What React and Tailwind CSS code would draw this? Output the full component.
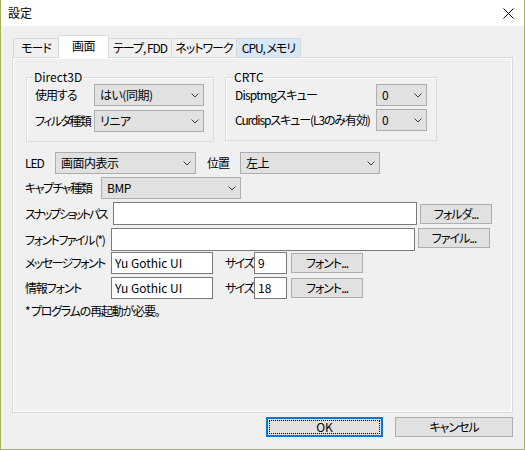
import React from 'react';

const Chevron = () => (
  <svg width="8" height="5" viewBox="0 0 8 5" className="shrink-0">
    <path d="M0.5 0.5 L4 4 L7.5 0.5" stroke="#3c3c3c" strokeWidth="1" fill="none" />
  </svg>
);

const Select = ({ value, w }) => (
  <div className={`flex items-center justify-between h-[22px] bg-[#e1e1e1] border border-[#adadad] pl-[5px] pr-[4px] shrink-0 ${w}`}>
    <span className="tracking-[-0.5px]">{value}</span>
    <Chevron />
  </div>
);

const Field = ({ value, w, h = 'h-[23px]' }) => (
  <div className={`flex items-center bg-white border border-[#7a7a7a] pl-[3px] shrink-0 ${h} ${w}`}>
    <span>{value}</span>
  </div>
);

const Btn = ({ children, w = 'w-[72px]' }) => (
  <div className={`flex items-center justify-center h-[20px] bg-[#e1e1e1] border border-[#adadad] shrink-0 tracking-[-1px] ${w}`}>
    {children}
  </div>
);

const Label = ({ children, w, t = 'tracking-[-1px]', className = '' }) => (
  <span className={`shrink-0 ${t} ${w} ${className}`}>{children}</span>
);

const tabs = [
  { label: 'モード', w: 'w-[46px]' },
  { label: '画面', w: 'w-[51px]', active: true },
  { label: 'テープ, FDD', w: 'w-[63px]' },
  { label: 'ネットワーク', w: 'w-[65px]' },
  { label: 'CPU, メモリ', w: 'w-[64px]', hover: true },
];

export default function App() {
  return (
    <div className="w-[525px] h-[450px] flex flex-col bg-[#f0f0f0] border-l border-r border-b border-[#a3b35c] text-[12px] leading-[14px] text-black whitespace-nowrap font-['Noto_Sans_CJK_JP','Noto_Sans',sans-serif] [font-feature-settings:'palt']">
      {/* title bar */}
      <div className="h-[26px] bg-white flex items-center justify-between pl-[7px] pr-[10px] shrink-0">
        <span>設定</span>
        <svg width="11" height="11" viewBox="0 0 11 11">
          <path d="M0.5 0.5 L10.5 10.5 M10.5 0.5 L0.5 10.5" stroke="#000" strokeWidth="1" />
        </svg>
      </div>

      <div className="flex flex-col pt-[9px] pl-[11px] pr-[11px]">
        {/* tabs */}
        <div className="flex items-end h-[22px] pl-[1px] relative z-10">
          {tabs.map((t, i) =>
            t.active ? (
              <div key={i} className={`h-[23px] -mb-px -ml-px bg-white border border-b-0 border-[#d9d9d9] flex items-center justify-center pb-[2px] tracking-[-0.5px] ${t.w}`}>
                {t.label}
              </div>
            ) : (
              <div key={i} className={`h-[19px] border-t border-r ${i === 0 ? 'border-l' : ''} border-[#d9d9d9] flex items-center justify-center tracking-[-1px] ${t.hover ? 'bg-[#d8e7f6]' : 'bg-[#f0f0f0]'} ${t.w}`}>
                {t.label}
              </div>
            )
          )}
        </div>

        {/* page */}
        <div className="h-[356px] border border-[#d9d9d9] shadow-[inset_0_0_0_1px_#ffffff] flex flex-col pl-[12px] pt-[12px]">
          <div className="flex items-start gap-[11px] ml-[1px]">
            <fieldset className="w-[188px] border border-[#dcdcdc] pl-[8px] pb-[9px] shadow-[inset_1px_1px_0_#fff]">
              <legend className="-ml-[2px] px-[1px]">Direct3D</legend>
              <div className="flex flex-col gap-[4px]">
                <div className="flex items-center">
                  <Label w="w-[59px]">使用する</Label>
                  <Select value="はい(同期)" w="w-[110px]" />
                </div>
                <div className="flex items-center">
                  <Label w="w-[59px]" t="tracking-[-1.6px]">フィルタ種類</Label>
                  <Select value="リニア" w="w-[110px]" />
                </div>
              </div>
            </fieldset>
            <fieldset className="w-[212px] border border-[#dcdcdc] pl-[9px] pb-[9px] shadow-[inset_1px_1px_0_#fff]">
              <legend className="-ml-[2px] px-[1px]">CRTC</legend>
              <div className="flex flex-col gap-[3px]">
                <div className="flex items-center">
                  <Label w="w-[141px]" t="tracking-[-0.8px]">Disptmgスキュー</Label>
                  <Select value="0" w="w-[51px]" />
                </div>
                <div className="flex items-center">
                  <Label w="w-[141px]" t="tracking-[-1.1px]">Curdispスキュー(L3のみ有効)</Label>
                  <Select value="0" w="w-[51px]" />
                </div>
              </div>
            </fieldset>
          </div>

          <div className="flex items-center mt-[10px]">
            <Label w="w-[30px]">LED</Label>
            <Select value="画面内表示" w="w-[141px]" />
            <Label w="w-[33px]" className="ml-[11px]">位置</Label>
            <Select value="左上" w="w-[140px]" />
          </div>

          <div className="flex items-center mt-[3px]">
            <Label w="w-[76px]" t="tracking-[-1.5px]">キャプチャ種類</Label>
            <Select value="BMP" w="w-[140px]" />
          </div>

          <div className="flex items-center mt-[3px]">
            <Label w="w-[88px]" t="tracking-[-2.2px]">スナップショットパス</Label>
            <Field value="" w="w-[304px]" />
            <div className="ml-[3px]">
              <Btn>フォルダ...</Btn>
            </div>
          </div>

          <div className="flex items-start mt-[3px]">
            <Label w="w-[86px]" t="tracking-[-1.5px]" className="self-center">フォントファイル (*)</Label>
            <Field value="" w="w-[304px]" />
            <div className="ml-[3px]">
              <Btn>ファイル...</Btn>
            </div>
          </div>

          <div className="flex items-center mt-[1px]">
            <Label w="w-[86px]" t="tracking-[-1.6px]">メッセージフォント</Label>
            <Field value="Yu Gothic UI" w="w-[102px]" h="h-[22px]" />
            <Label w="w-[29px]" t="tracking-[-1.5px]" className="ml-[12px]">サイズ</Label>
            <Field value="9" w="w-[33px]" h="h-[22px]" />
            <div className="ml-[4px]">
              <Btn>フォント...</Btn>
            </div>
          </div>

          <div className="flex items-center mt-[3px]">
            <Label w="w-[86px]" t="tracking-[-1.2px]">情報フォント</Label>
            <Field value="Yu Gothic UI" w="w-[102px]" h="h-[22px]" />
            <Label w="w-[29px]" t="tracking-[-1.5px]" className="ml-[12px]">サイズ</Label>
            <Field value="18" w="w-[33px]" h="h-[22px]" />
            <div className="ml-[4px]">
              <Btn>フォント...</Btn>
            </div>
          </div>

          <div className="mt-[5px] tracking-[-1.2px]">* プログラムの再起動が必要。</div>
        </div>

        {/* dialog buttons */}
        <div className="flex justify-end gap-[12px] mt-[4px]">
          <div className="w-[117px] h-[20px] bg-[#e1e1e1] border border-[#0078d7] shadow-[inset_0_0_0_1px_#0078d7] p-[2px]">
            <div className="w-full h-full border border-dotted border-black flex items-center justify-center">OK</div>
          </div>
          <Btn w="w-[118px]">キャンセル</Btn>
        </div>
      </div>
    </div>
  );
}
